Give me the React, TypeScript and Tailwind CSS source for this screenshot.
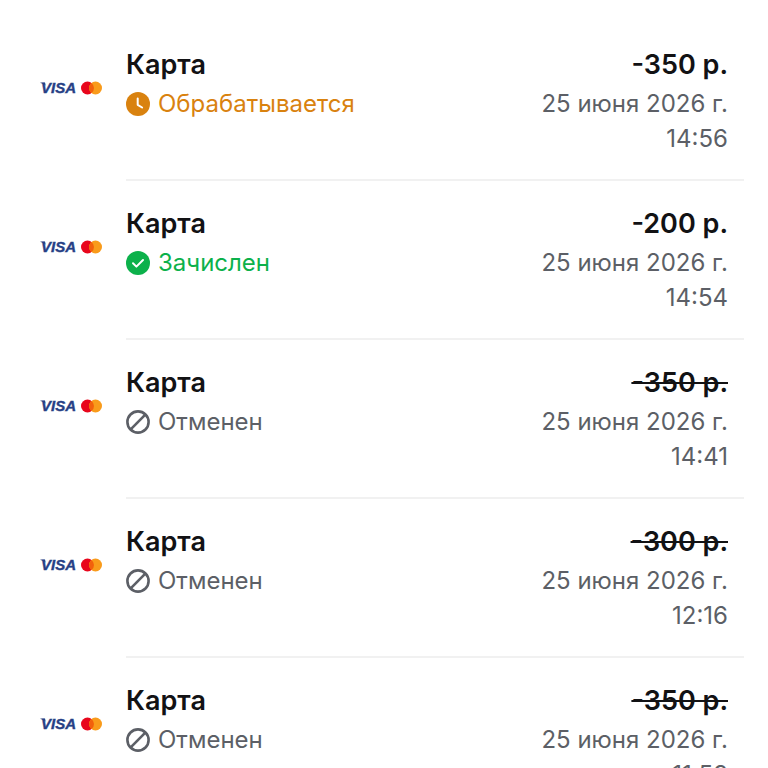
import React from 'react';

type PaymentStatus = 'processing' | 'credited' | 'cancelled';

interface Payment {
    id: number;
    status: PaymentStatus;
    amount: string;
    date: string;
    time: string;
}

const payments: Payment[] = [
    { id: 1, status: 'processing', amount: '-350 р.', date: '25 июня 2026 г.', time: '14:56' },
    { id: 2, status: 'credited', amount: '-200 р.', date: '25 июня 2026 г.', time: '14:54' },
    { id: 3, status: 'cancelled', amount: '-350 р.', date: '25 июня 2026 г.', time: '14:41' },
    { id: 4, status: 'cancelled', amount: '-300 р.', date: '25 июня 2026 г.', time: '12:16' },
    { id: 5, status: 'cancelled', amount: '-350 р.', date: '25 июня 2026 г.', time: '11:53' },
];

const statusLabels: Record<PaymentStatus, string> = {
    processing: 'Обрабатывается',
    credited: 'Зачислен',
    cancelled: 'Отменен',
};

const statusColors: Record<PaymentStatus, string> = {
    processing: 'text-[#d9820f]',
    credited: 'text-[#0cb14b]',
    cancelled: 'text-[#5c5f66]',
};

const StatusIcon: React.FC<{ status: PaymentStatus }> = ({ status }) => (
    <svg viewBox="0 0 24 24" fill="none" className="size-6 shrink-0" aria-hidden="true">
        {status === 'cancelled' ? (
            <>
                <circle cx="12" cy="12" r="10.6" stroke="currentColor" strokeWidth="2.6" />
                <path d="M19.3 4.7 4.7 19.3" stroke="currentColor" strokeWidth="2.6" />
            </>
        ) : (
            <>
                <circle cx="12" cy="12" r="12" fill="currentColor" />
                <path
                    d={status === 'credited' ? 'm7 12.3 3.4 3.3L17 9' : 'M11.7 6.5v6.3l4.4 2.7'}
                    stroke="white"
                    strokeWidth="2"
                    strokeLinecap="round"
                    strokeLinejoin="round"
                />
            </>
        )}
    </svg>
);

const CardBrands: React.FC = () => (
    <svg viewBox="0 0 64 24" className="h-6 w-16 shrink-0" role="img" aria-label="Visa, Mastercard">
        <path d="M.5 6.6h4.5l.6 3.2C4.3 8.400 2.700 7.400.5 7Z" fill="#263f85" />
        <text
            x="1"
            y="17"
            stroke="#263f85"
            strokeWidth="0.4"
            className="fill-[#263f85] font-['Liberation_Sans',sans-serif] text-[15px] font-bold italic"
        >
            VISA
        </text>
        <circle cx="47.5" cy="12" r="6.5" fill="#e8061c" />
        <circle cx="55.5" cy="12" r="6.5" fill="#f99b1b" />
        <path d="M51.5 6.880a6.5 6.5 0 0 1 0 10.240 6.5 6.5 0 0 1 0-10.240Z" fill="#f2600c" />
    </svg>
);

const PaymentRow: React.FC<{ payment: Payment }> = ({ payment }) => (
    <li className="flex pl-10">
        <div className="mt-11 mr-[22px] self-start">
            <CardBrands />
        </div>
        <div className="flex flex-1 justify-between border-b-2 border-[#f1f1f1] pt-[11px] pr-4 pb-[23px]">
            <div>
                <h2 className="text-[27px] leading-[43px] font-semibold text-[#121214]">Карта</h2>
                <div className={`flex items-center gap-2 text-2xl leading-[35px] ${statusColors[payment.status]}`}>
                    <StatusIcon status={payment.status} />
                    <span>{statusLabels[payment.status]}</span>
                </div>
            </div>
            <div className="text-right text-2xl leading-[35px] text-[#5c5f66]">
                <p className={`text-[27px] leading-[43px] font-semibold text-[#121214] ${payment.status === 'cancelled' ? 'line-through' : ''}`}>
                    {payment.amount}
                </p>
                <p>{payment.date}</p>
                <p>{payment.time}</p>
            </div>
        </div>
    </li>
);

const App: React.FC = () => (
    <main className="h-screen overflow-hidden bg-white pt-8 pr-6 font-['Inter',sans-serif]">
        <ul className="flex flex-col gap-[10px]">
            {payments.map(payment => (
                <PaymentRow key={payment.id} payment={payment} />
            ))}
        </ul>
    </main>
);

export default App;
